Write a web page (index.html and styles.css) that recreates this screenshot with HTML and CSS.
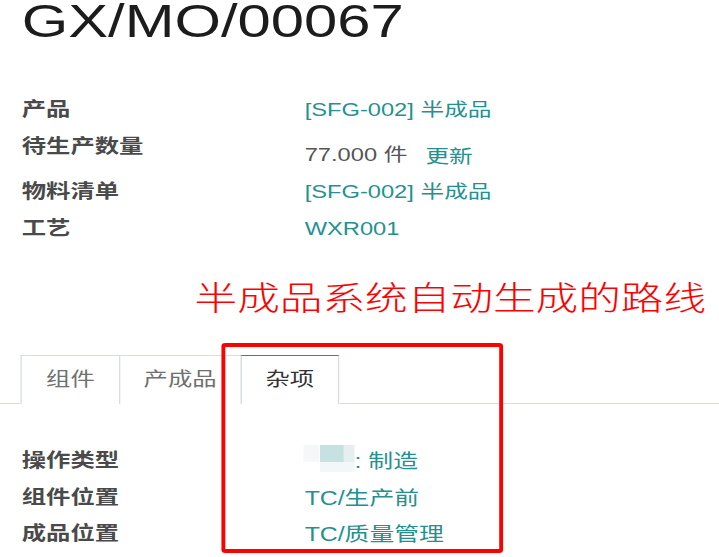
FILE: index.html
```html
<!DOCTYPE html>
<html lang="zh">
<head>
<meta charset="utf-8">
<title>GX/MO/00067</title>
<link rel="stylesheet" href="styles.css">
</head>
<body>
<div class="page">
  <h1 class="title">GX/MO/00067</h1>

  <div class="group group-main">
    <div class="row"><div class="label">产品</div><div class="value link">[SFG-002] 半成品</div></div>
    <div class="row row-qty"><div class="label">待生产数量</div><div class="value qty">77.000 件 <span class="btn-link">更新</span></div></div>
    <div class="row"><div class="label">物料清单</div><div class="value link">[SFG-002] 半成品</div></div>
    <div class="row"><div class="label">工艺</div><div class="value link">WXR001</div></div>
  </div>

  <div class="note">半成品系统自动生成的路线</div>

  <ul class="tabs">
    <li class="tab">组件</li>
    <li class="tab">产成品</li>
    <li class="tab active">杂项</li>
  </ul>

  <div class="group group-misc">
    <div class="row"><div class="label">操作类型</div><div class="value link"><span class="blur"></span>: 制造</div></div>
    <div class="row"><div class="label">组件位置</div><div class="value link">TC/生产前</div></div>
    <div class="row"><div class="label">成品位置</div><div class="value link">TC/质量管理</div></div>
  </div>

  <div class="redbox"></div>
</div>
</body>
</html>
```

FILE: styles.css
```css
html, body {
  margin: 0;
  padding: 0;
  background: #ffffff;
  overflow: hidden;
}
body {
  width: 719px;
  height: 557px;
}
.page {
  position: relative;
  width: 562px;
  transform: scaleX(1.28);
  transform-origin: 0 0;
  font-family: "Liberation Sans", "Noto Sans CJK SC", sans-serif;
  font-size: 18.5px;
  line-height: 24px;
  color: #4d4d4d;
}
.title {
  margin: 0;
  padding-left: 17px;
  font-size: 46.7px;
  line-height: 42px;
  font-weight: normal;
  color: #1c1c1c;
}
.group {
  display: flex;
  flex-direction: column;
  padding-left: 17px;
}
.group-main {
  margin-top: 56px;
}
.row {
  display: grid;
  grid-template-columns: 221px 1fr;
  padding-bottom: 13px;
}
.label {
  font-size: 19px;
  font-weight: bold;
  color: #4a4a4a;
}
.value {
  color: #555555;
}
.link {
  color: #25918f;
}
.qty {
  padding-top: 8px;
}
.btn-link {
  color: #25918f;
  margin-left: 9px;
  position: relative;
  top: 2px;
}
.note {
  margin-top: 22px;
  padding-left: 152px;
  font-family: "Noto Sans CJK SC", sans-serif;
  font-size: 33.3px;
  font-weight: 300;
  line-height: 40px;
  color: #ff0000;
  white-space: nowrap;
}
.tabs {
  list-style: none;
  margin: 39px 0 0 0;
  padding: 0 0 0 16.4px;
  display: flex;
  border-bottom: 1px solid #d9dde2;
}
.tab {
  border: 1px solid #d9dde2;
  border-bottom: none;
  margin-right: -1px;
  margin-bottom: -1px;
  padding: 12px 18.6px 11px;
  font-size: 19px;
  color: #707070;
  background: #ffffff;
}
.tab.active {
  border-top: 1px solid #8a5a83;
  color: #333333;
  padding-bottom: 12px;
}
.group-misc {
  margin-top: 45px;
}
.group-misc .row {
  padding-bottom: 12.5px;
}
.group-misc .value {
  font-size: 19.4px;
}
.blur {
  display: inline-block;
  position: relative;
  width: 40px;
  height: 1px;
  margin-left: -1px;
}
.blur::before {
  content: "";
  position: absolute;
  left: 0;
  top: -22.5px;
  width: 40px;
  height: 27px;
  background:
    linear-gradient(#c6e1e1, #c6e1e1) 12.5px 0 / 18.5px 17px no-repeat,
    linear-gradient(#e6efef, #e6efef) 31px 0 / 9px 17px no-repeat,
    linear-gradient(#f3f7f7, #f3f7f7) 12.5px 17px / 27.5px 10px no-repeat,
    linear-gradient(#f5f8f8, #f5f8f8) 0 0 / 12.5px 17px no-repeat;
}
.redbox {
  position: absolute;
  left: 172.7px;
  top: 343px;
  width: 220px;
  height: 210px;
  box-sizing: border-box;
  border: 4px solid #ff0000;
  border-left-width: 3.2px;
  border-right-width: 3.2px;
  border-radius: 3px;
}
```
